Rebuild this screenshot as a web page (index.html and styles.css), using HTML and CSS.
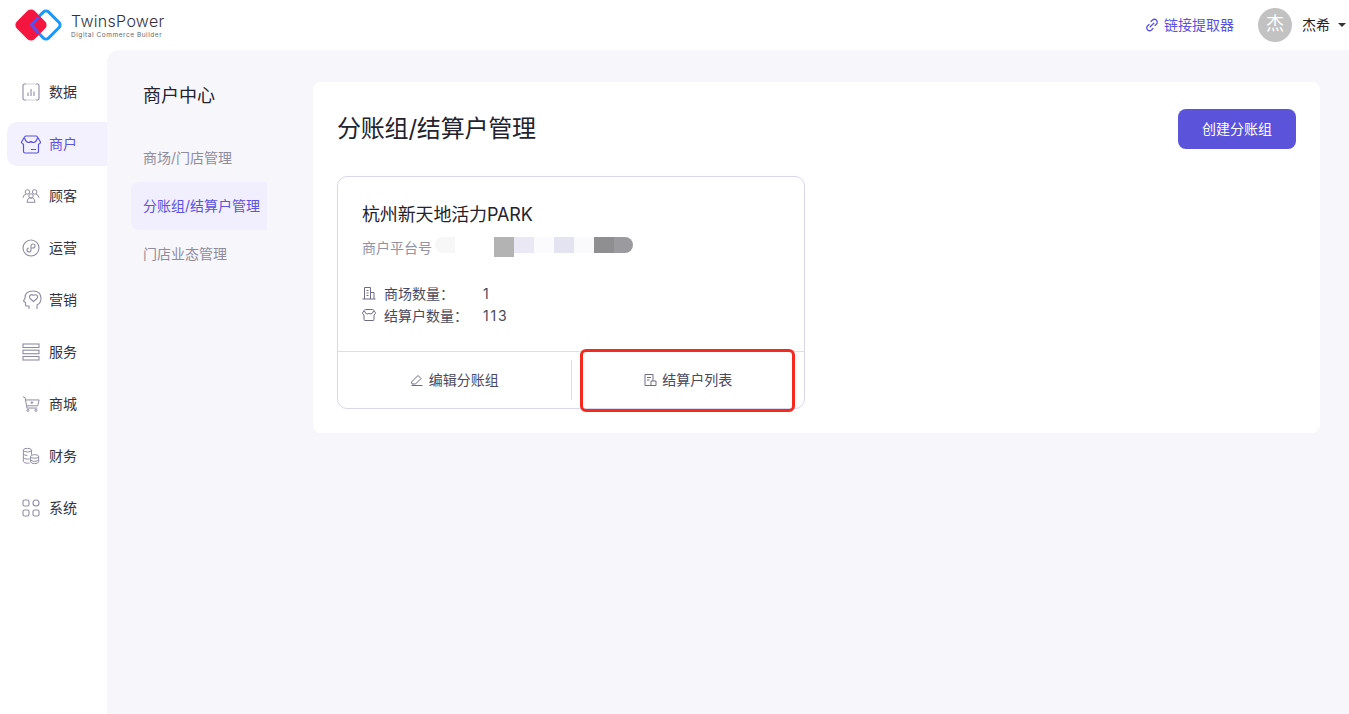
FILE: index.html
```html
<!DOCTYPE html>
<html lang="zh-CN">
<head>
	<meta charset="UTF-8">
	<title>分账组/结算户管理</title>
	<link rel="stylesheet" href="styles.css">
</head>
<body>
	<div class="top">
		<div class="logo">
			<svg width="50" height="50" viewBox="0 0 50 50">
				<rect x="21" y="14" width="22" height="22" rx="3.500" transform="rotate(45 32 25)" fill="none" stroke="#1a98ff" stroke-width="3"/>
				<rect x="4.500" y="12.500" width="25" height="25" rx="5" transform="rotate(45 17 25)" fill="#f5163f"/>
				<path d="M24.500 17L17.500 25 24.500 33" fill="none" stroke="#5a4ff0" stroke-width="3"/>
			</svg>
			<div class="logo-text">
				<div class="logo-name">TwinsPower</div>
				<div class="logo-sub">Digital Commerce Builder</div>
			</div>
		</div>
		<div class="top-right">
			<span class="link-tool">
				<svg width="14" height="14" viewBox="0 0 14 14" fill="none" stroke="#5b53d9" stroke-width="1.300" stroke-linecap="round"><path d="M6 3.500l1.500-1.500a2.600 2.600 0 0 1 3.700 0l.3.300a2.600 2.600 0 0 1 0 3.700L10 7.500"/><path d="M8 10.500L6.500 12a2.600 2.600 0 0 1-3.700 0l-.3-.300a2.600 2.600 0 0 1 0-3.700L4 6.500"/><path d="M5.200 8.800l3.600-3.600"/></svg>
				<span class="top-text">链接提取器</span>
			</span>
			<span class="avatar">杰</span>
			<span class="user top-text">杰希</span>
			<span class="caret"></span>
		</div>
	</div>
	<div class="wrap">
		<div class="side">
			<div class="side-item">
				<svg class="ico" viewBox="0 0 18 18"><path d="M4 1H2.500Q1 1 1 2.500v13Q1 17 2.500 17H4M14 1h1.500Q17 1 17 2.500v13q0 1.500-1.500 1.500H14"/><path d="M4 1h10M4 17h10" stroke-opacity=".4"/><path d="M6 9.500v3.500M9 6v7M12 8.500v4.500"/></svg>
				<span>数据</span>
			</div>
			<div class="side-item on">
				<svg class="ico" viewBox="0 0 20 19"><path d="M5 1h10q1 0 1.500 1l3 5q0 1.500-1.500 2l-.5.300v7.200q0 1.500-1.500 1.500H4q-1.500 0-1.500-1.500V9.300L2 9Q.5 8.500.5 7l3-5Q4 1 5 1z"/><path d="M3.500 3Q5 7.500 7.500 7.500q1.500 0 2.500-1 1 1 2.500 1Q15 7.500 16.500 3M10 14.500h5"/></svg>
				<span>商户</span>
			</div>
			<div class="side-item">
				<svg class="ico" viewBox="0 0 20 18"><circle cx="6" cy="4.500" r="2.500"/><circle cx="14" cy="4.500" r="2.500"/><circle cx="10" cy="9" r="2.500"/><path d="M1 11q1-4 3.500-4M19 11q-1-4-3.500-4M5.500 16q.5-4.500 3-5h3q2.500.5 3 5z"/></svg>
				<span>顾客</span>
			</div>
			<div class="side-item">
				<svg class="ico" viewBox="0 0 18 18"><circle cx="9" cy="9" r="8"/><path d="M9 9V7a2 2 0 0 1 4 0 2 2 0 0 1-2 2H9v2a2 2 0 0 1-4 0 2 2 0 0 1 2-2"/></svg>
				<span>运营</span>
			</div>
			<div class="side-item">
				<svg class="ico ico-head" viewBox="0 0 20 20"><path d="M7 19v-3H4.500q-1 0-1-1v-2.500L1.500 11 3 8q0-7 8-7t8 7.500q0 4.500-4 6.500v4"/><path d="M11.500 11.500L8 8.500a2.300 2.300 0 0 1 3.500-3 2.300 2.300 0 0 1 3.500 3z"/></svg>
				<span>营销</span>
			</div>
			<div class="side-item">
				<svg class="ico" viewBox="0 0 18 18"><rect x="1" y="1" width="16" height="3.500"/><rect x="1" y="7.200" width="16" height="3.500"/><rect x="1" y="13.500" width="16" height="3.500"/></svg>
				<span>服务</span>
			</div>
			<div class="side-item">
				<svg class="ico" viewBox="0 0 20 18"><path d="M1 1l2.500 1 2 11.500h11.500M4 4.500h15l-1.500 6.500H5.200"/><circle cx="6.500" cy="16" r="1.200"/><circle cx="15.500" cy="16" r="1.200"/><path d="M11 6v3M9.500 7.500h3"/></svg>
				<span>商城</span>
			</div>
			<div class="side-item">
				<svg class="ico" viewBox="0 0 20 18"><ellipse cx="6" cy="2.500" rx="4.500" ry="2"/><path d="M1.500 2.500v12.500q.5 2 4.500 2 1.500 0 2.500-.3M1.500 6.500q1 2 4.500 2M1.500 10.500q1 2 4.500 2 1 0 2.500-.3M10.500 2.500v5"/><ellipse cx="14" cy="9.500" rx="4.500" ry="2"/><path d="M9.500 9.500v6q.5 2 4.500 2t4.500-2v-6M9.500 13q1 2 4.500 2t4.500-2"/></svg>
				<span>财务</span>
			</div>
			<div class="side-item">
				<svg class="ico" viewBox="0 0 18 18"><rect x="1" y="1" width="6" height="6" rx="1.500"/><rect x="11" y="1" width="6" height="6" rx="3"/><rect x="1" y="11" width="6" height="6" rx="1.500"/><rect x="11" y="11" width="6" height="6" rx="1.500"/></svg>
				<span>系统</span>
			</div>
		</div>
		<div class="main">
			<div class="sub">
				<div class="sub-title">商户中心</div>
				<div class="sub-item">商场/门店管理</div>
				<div class="sub-item on">分账组/结算户管理</div>
				<div class="sub-item">门店业态管理</div>
			</div>
			<div class="panel">
				<div class="panel-head">
					<h1>分账组/结算户管理</h1>
					<span class="btn">创建分账组</span>
				</div>
				<div class="card">
					<div class="card-body">
						<div class="card-name">杭州新天地活力PARK</div>
						<div class="card-no">
							<span>商户平台号</span>
							<div class="mask">
								<i class="m1"></i><i class="m2"></i><i class="m3"></i><i class="m4"></i><i class="m5"></i><i class="m6"></i><i class="m7"></i><i class="m8"></i><i class="m9"></i>
							</div>
						</div>
						<div class="stat">
							<svg class="ico-s" viewBox="0 0 14 14"><path d="M.5 13h13M2.500 13V1.500h6V13M8.500 6.500h3.500V13M4.500 4.500h2M4.500 7h2M4.500 9.500h2"/></svg>
							<span class="stat-k">商场数量：</span><span class="stat-v">1</span>
						</div>
						<div class="stat">
							<svg class="ico-s" viewBox="0 0 14 14"><path d="M3.500 1.500h7q.8 0 1.200.6L13.500 5q.2.500-.2.900L12 7v4.500q0 1-1 1H3q-1 0-1-1V7L.7 5.900Q.3 5.500.5 5l1.800-2.900q.4-.6 1.200-.6z"/><path d="M2.500 3Q3.500 6 5 6q1.200 0 2-.8.8.8 2 .8 1.500 0 2.500-3"/></svg>
							<span class="stat-k">结算户数量：</span><span class="stat-v">113</span>
						</div>
					</div>
					<div class="card-foot">
						<div class="foot-btn">
							<svg class="ico-s" viewBox="0 0 14 14"><path d="M1.500 9L8 2.500l3 3L5.500 11H2zM1.500 12.500h11"/></svg>
							<span>编辑分账组</span>
						</div>
						<div class="foot-btn">
							<svg class="ico-s" viewBox="0 0 14 14"><path d="M10 8V1.500H2v11h11V8H8v4.500M4 4.500h4M4 7h2.500"/></svg>
							<span>结算户列表</span>
						</div>
					</div>
					<div class="mark"></div>
				</div>
			</div>
		</div>
	</div>
</body>
</html>
```
FILE: styles.css
```css
html,body{height: 100%}
body{margin: 0;background: #fff;font-family: "Inter","Noto Sans CJK SC",sans-serif;font-size: 14px;color: #2a2a38;overflow: hidden}
.top{height: 50px;display: flex;justify-content: space-between;align-items: center}
.logo{display: flex;align-items: center;margin-left: 14px}
.logo svg{display: block}
.logo-text{margin-left: 7px;color: #33333f}
.logo-name{font-size: 16px;line-height: 19px;letter-spacing: .3px;font-weight: 300}
.logo-sub{font-size: 6.500px;line-height: 8px;letter-spacing: .55px;font-weight: 400;color: #666672}
.top-right{display: flex;align-items: center;margin-right: 3px}
.top-text{margin-top: -3px}
.link-tool{display: flex;align-items: center;gap: 5px;color: #5b53d9}
.avatar{width: 34px;height: 34px;border-radius: 50%;background: #c2c2c2;color: #fff;font-size: 18px;line-height: 32px;text-align: center;margin-left: 24px}
.user{margin-left: 10px;color: #23232e}
.caret{width: 0;height: 0;border: 4px solid transparent;border-top-color: #333;border-bottom: 0;margin-left: 8px}
.wrap{display: flex;height: 664px}
.side{width: 107px;flex: none;padding-top: 20px;box-sizing: border-box}
.side-item{height: 44px;margin: 0 0 8px 7px;padding-left: 15px;display: flex;align-items: center;gap: 9px;border-radius: 10px 0 0 10px;color: #33333f}
.side-item span{margin-top: -2px}
.side-item.on{background: #f3f1fd;color: #5b53d9;gap: 8px}
.ico{width: 18px;height: 18px;fill: none;stroke: #8f8da3;stroke-width: 1.100}
.ico-head{width: 20px;height: 20px;margin-right: -2px}
.side-item.on .ico{stroke: #5b53d9;stroke-width: 1.200;width: 20px;height: 19px;margin-left: -1px}
.main{flex: 1;display: flex;background: #f7f6fb;border-radius: 12px 0 0 0;padding: 32px 29px 0 24px}
.sub{width: 136px;flex: none;margin-right: 46px}
.sub-title{font-size: 18px;line-height: 28px;padding-left: 12px;color: #23232e}
.sub-item{height: 48px;line-height: 48px;padding-left: 12px;color: #8f8d9c;white-space: nowrap;border-radius: 8px 0 0 8px}
.sub-title + .sub-item{margin-top: 24px}
.sub-item.on{background: #f1effd;color: #5b53d9}
.panel{flex: 1;height: 351px;background: #fff;border-radius: 8px;padding: 27px 24px 0;box-sizing: border-box}
.panel-head{display: flex;justify-content: space-between;align-items: center;height: 40px}
h1{margin: -6px 0 0;font-size: 24px;font-weight: 400;letter-spacing: -.2px;color: #23232e}
.btn{width: 118px;height: 40px;line-height: 40px;border-radius: 8px;background: #5b53d9;color: #fff;text-align: center}
.card{position: relative;width: 468px;height: 233px;margin-top: 27px;border: 1px solid #d9d6ee;border-radius: 10px;box-sizing: border-box}
.card-body{height: 175px;padding: 25px 24px 0;box-sizing: border-box;border-bottom: 1px solid #dfdcf0}
.card-name{font-size: 18px;line-height: 26px;letter-spacing: -.15px;color: #23232e}
.card-no{display: flex;align-items: center;height: 20px;margin-top: 9px;margin-bottom: 25px;color: #9492a3}
.mask{display: flex;align-items: flex-start;height: 20px;margin-left: 3px}
.mask i{display: block;height: 16px}
.m1{width: 20px;background: #f7f7f8;border-radius: 10px 0 0 10px}
.m2{width: 39px;background: #fff}
.mask .m3{width: 20px;height: 20px;background: #b3b3b3}
.m4{width: 20px;background: #e9e8f4}
.m5{width: 20px;background: #fbfafd}
.m6{width: 20px;background: #e4e3f1}
.m7{width: 20px;background: #fafafc}
.m8{width: 20px;background: #8f8e90}
.m9{width: 19px;background: #9b9a9e;border-radius: 0 10px 10px 0}
.stat{display: flex;align-items: center;height: 22px;color: #4a4a5e}
.stat-k{width: 99px;margin-left: 8px}
.stat-v{letter-spacing: 1.800px}
.ico-s{width: 14px;height: 14px;fill: none;stroke: #6e6c88;stroke-width: 1}
.card-foot{display: flex;height: 56px;align-items: center}
.foot-btn{flex: 1;height: 40px;display: flex;align-items: center;justify-content: center;gap: 5px;color: #4a4a5e}
.foot-btn span{margin-top: -2px}
.foot-btn + .foot-btn{border-left: 1px solid #dddbe8}
.mark{position: absolute;left: 242px;top: 172px;width: 215px;height: 63px;border: 3px solid #f5291d;border-radius: 6px;box-sizing: border-box}
```
